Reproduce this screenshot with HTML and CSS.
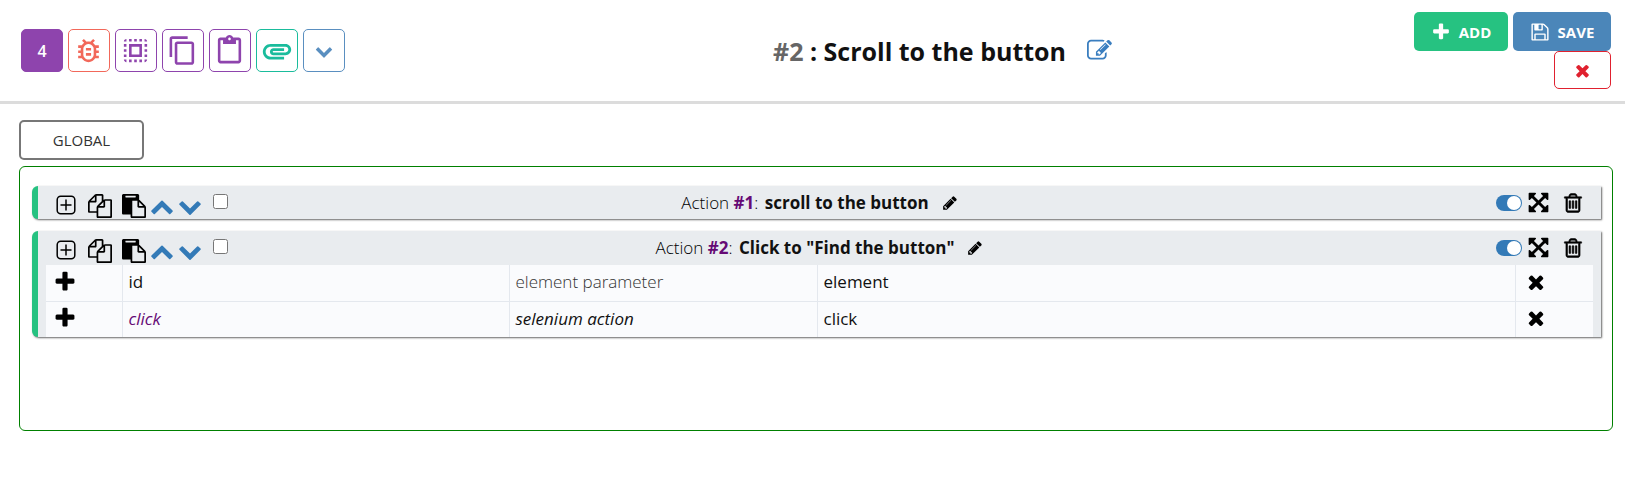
FILE: index.html
```html
<!DOCTYPE html>
<html lang="en">
<head>
<meta charset="utf-8">
<title>Scroll to the button</title>
<link rel="stylesheet" href="styles.css">
</head>
<body>
<svg class="defs" width="0" height="0" aria-hidden="true">
  <symbol id="fa-plus" viewBox="0 0 1792 1792"><path d="M1600 736v192q0 40-28 68t-68 28h-416v416q0 40-28 68t-68 28h-192q-40 0-68-28t-28-68v-416h-416q-40 0-68-28t-28-68v-192q0-40 28-68t68-28h416v-416q0-40 28-68t68-28h192q40 0 68 28t28 68v416h416q40 0 68 28t28 68z"/></symbol>
  <symbol id="fa-times" viewBox="0 0 1792 1792"><path d="M1490 1322q0 40-28 68l-136 136q-28 28-68 28t-68-28l-294-294-294 294q-28 28-68 28t-68-28l-136-136q-28-28-28-68t28-68l294-294-294-294q-28-28-28-68t28-68l136-136q28-28 68-28t68 28l294 294 294-294q28-28 68-28t68 28l136 136q28 28 28 68t-28 68l-294 294 294 294q28 28 28 68z"/></symbol>
  <symbol id="fa-down" viewBox="0 0 1792 1792"><path d="M1683 808l-742 741q-19 19-45 19t-45-19l-742-741q-19-19-19-45.5t19-45.5l166-165q19-19 45-19t45 19l531 531 531-531q19-19 45-19t45 19l166 165q19 19 19 45.5t-19 45.5z"/></symbol>
  <symbol id="fa-up" viewBox="0 0 1792 1792"><path d="M1683 1331l-166 165q-19 19-45 19t-45-19l-531-531-531 531q-19 19-45 19t-45-19l-166-165q-19-19-19-45.5t19-45.5l742-741q19-19 45-19t45 19l742 741q19 19 19 45.5t-19 45.5z"/></symbol>
  <symbol id="fa-pencil" viewBox="0 0 1792 1792"><path d="M491 1536l91-91-235-235-91 91v107h128v128h107zm523-928q0-22-22-22-10 0-17 7l-542 542q-7 7-7 17 0 22 22 22 10 0 17-7l542-542q7-7 7-17zm-54-192l416 416-832 832h-416v-416zm683 96q0 53-37 90l-166 166-416-416 166-165q36-38 90-38 53 0 91 38l235 234q37 39 37 91z"/></symbol>
  <symbol id="fa-trash" viewBox="0 0 1792 1792"><path d="M704 736v576q0 14-9 23t-23 9h-64q-14 0-23-9t-9-23v-576q0-14 9-23t23-9h64q14 0 23 9t9 23zm256 0v576q0 14-9 23t-23 9h-64q-14 0-23-9t-9-23v-576q0-14 9-23t23-9h64q14 0 23 9t9 23zm256 0v576q0 14-9 23t-23 9h-64q-14 0-23-9t-9-23v-576q0-14 9-23t23-9h64q14 0 23 9t9 23zm128 724v-948h-896v948q0 22 7 40.5t14.5 27 10.5 8.5h832q3 0 10.5-8.5t14.5-27 7-40.5zm-672-1076h448l-48-117q-7-9-17-11h-317q-10 2-17 11zm928 32v64q0 14-9 23t-23 9h-96v948q0 83-47 143.5t-113 60.5h-832q-66 0-113-58.5t-47-141.5v-952h-96q-14 0-23-9t-9-23v-64q0-14 9-23t23-9h309l70-167q15-37 54-63t79-26h320q40 0 79 26t54 63l70 167h309q14 0 23 9t9 23z"/></symbol>
  <symbol id="fa-expand" viewBox="0 0 1792 1792"><path d="M1411 541l-355 355 355 355 144-144q29-31 70-14 39 17 39 59v448q0 26-19 45t-45 19h-448q-42 0-59-40-17-39 14-69l144-144-355-355-355 355 144 144q31 30 14 69-17 40-59 40h-448q-26 0-45-19t-19-45v-448q0-42 40-59 39-17 69 14l144 144 355-355-355-355-144 144q-19 19-45 19-12 0-24-5-40-17-40-59v-448q0-26 19-45t45-19h448q42 0 59 40 17 39-14 69l-144 144 355 355 355-355-144-144q-31-30-14-69 17-40 59-40h448q26 0 45 19t19 45v448q0 42-39 59-13 5-25 5-26 0-45-19z"/></symbol>
  <symbol id="fa-edit" viewBox="0 0 1792 1792"><path d="M888 1184l116-116-152-152-116 116v56h96v96h56zm440-720q-16-16-33 1l-350 350q-17 17-1 33t33-1l350-350q17-17 1-33zm80 594v190q0 119-84.5 203.5t-203.5 84.5h-832q-119 0-203.5-84.5t-84.5-203.5v-832q0-119 84.5-203.5t203.5-84.5h832q63 0 117 25 15 7 18 23 3 17-9 29l-49 49q-14 14-32 8-23-6-45-6h-832q-66 0-113 47t-47 113v832q0 66 47 113t113 47h832q66 0 113-47t47-113v-126q0-13 9-22l64-64q15-15 35-7t20 29zm-96-738l288 288-672 672h-288v-288zm444 132l-92 92-288-288 92-92q28-28 68-28t68 28l152 152q28 28 28 68t-28 68z"/></symbol>
  <symbol id="fa-save" viewBox="0 0 1792 1792"><path d="M512 1536h768v-384h-768v384zm896 0h128v-896q0-14-10-38.5t-20-34.5l-281-281q-10-10-34-20t-39-10v416q0 40-28 68t-68 28h-576q-40 0-68-28t-28-68v-416h-128v1280h128v-416q0-40 28-68t68-28h832q40 0 68 28t28 68v416zm-384-928v-320q0-13-9.5-22.5t-22.5-9.5h-192q-13 0-22.5 9.5t-9.5 22.5v320q0 13 9.5 22.5t22.5 9.5h192q13 0 22.5-9.5t9.5-22.5zm640 32v928q0 40-28 68t-68 28h-1344q-40 0-68-28t-28-68v-1344q0-40 28-68t68-28h928q40 0 88 20t76 48l280 280q28 28 48 76t20 88z"/></symbol>
  <symbol id="fa-copy" viewBox="0 0 1792 1792"><path d="M1696 384q40 0 68 28t28 68v1216q0 40-28 68t-68 28h-960q-40 0-68-28t-28-68v-288h-544q-40 0-68-28t-28-68v-672q0-40 20-88t48-76l408-408q28-28 76-48t88-20h416q40 0 68 28t28 68v328q68-40 128-40h416zm-544 213l-299 299h299v-299zm-640-384l-299 299h299v-299zm196 647l316-316v-416h-384v416q0 40-28 68t-68 28h-416v640h512v-256q0-40 20-88t48-76zm956 804v-1152h-384v416q0 40-28 68t-68 28h-416v640h768z"/></symbol>
  <symbol id="fa-paste" viewBox="0 0 1792 1792"><path d="M768 1664h896v-640h-416q-40 0-68-28t-28-68v-416h-384v1152zm256-1440v-64q0-13-9.5-22.5t-22.5-9.5h-704q-13 0-22.5 9.5t-9.5 22.5v64q0 13 9.5 22.5t22.5 9.5h704q13 0 22.5-9.5t9.5-22.5zm256 672h299l-299-299v299zm512 128v672q0 40-28 68t-68 28h-960q-40 0-68-28t-28-68v-160h-544q-40 0-68-28t-28-68v-1344q0-40 28-68t68-28h1088q40 0 68 28t28 68v328q21 13 36 28l408 408q28 28 48 76t20 88z"/></symbol>
  <symbol id="plus-box" viewBox="0 0 20 20"><rect x="1.2" y="1.2" width="17.6" height="17.6" rx="3.5" fill="none" stroke="currentColor" stroke-width="1.5"/><path d="M10 4.5v11M4.5 10h11" fill="none" stroke="currentColor" stroke-width="1.5"/></symbol>
</svg>

<header class="topbar">
  <div class="tools">
    <span class="tool tool-count">4</span>
    <button class="tool tool-bug" type="button"><svg class="mi" viewBox="0 0 24 24"><path d="M20 8h-2.81c-.45-.78-1.07-1.45-1.82-1.96L17 4.41 15.59 3l-2.17 2.17c-.46-.11-.93-.17-1.42-.17s-.96.06-1.41.17L8.41 3 7 4.41l1.62 1.63c-.75.51-1.37 1.18-1.81 1.96H4v2h2.09c-.05.33-.09.66-.09 1v1H4v2h2v1c0 .34.04.67.09 1H4v2h2.81c1.04 1.79 2.97 3 5.19 3s4.15-1.21 5.19-3H20v-2h-2.09c.05-.33.09-.66.09-1v-1h2v-2h-2v-1c0-.34-.04-.67-.09-1H20V8zm-4 4v3c0 .22-.03.47-.07.7l-.1.65-.37.65c-.72 1.24-2.04 2-3.46 2s-2.74-.77-3.46-2l-.37-.64-.1-.65C8.03 15.48 8 15.23 8 15v-4c0-.23.03-.48.07-.7l.1-.65.37-.65c.3-.52.72-.97 1.21-1.31l.57-.39.74-.18c.31-.08.63-.12.94-.12.32 0 .63.04.95.12l.68.16.61.42c.5.34.91.78 1.21 1.31l.38.65.1.65c.04.22.07.47.07.69v1zm-6 2h4v2h-4zm0-4h4v2h-4z"/></svg></button>
    <button class="tool tool-purple" type="button"><svg class="mi" viewBox="0 0 24 24"><path d="M3 5h2V3c-1.1 0-2 .9-2 2zm0 8h2v-2H3v2zm4 8h2v-2H7v2zM3 9h2V7H3v2zm10-6h-2v2h2V3zm6 0v2h2c0-1.1-.9-2-2-2zM5 21v-2H3c0 1.1.9 2 2 2zm-2-4h2v-2H3v2zM9 3H7v2h2V3zm2 18h2v-2h-2v2zm8-8h2v-2h-2v2zm0 8c1.1 0 2-.9 2-2h-2v2zm0-12h2V7h-2v2zm0 8h2v-2h-2v2zm-4 4h2v-2h-2v2zm0-16h2V3h-2v2zM7 17h10V7H7v10zm2-8h6v6H9V9z"/></svg></button>
    <button class="tool tool-purple" type="button"><svg class="mi" viewBox="0 0 24 24"><path d="M16 1H4c-1.1 0-2 .9-2 2v14h2V3h12V1zm3 4H8c-1.1 0-2 .9-2 2v14c0 1.1.9 2 2 2h11c1.1 0 2-.9 2-2V7c0-1.1-.9-2-2-2zm0 16H8V7h11v14z"/></svg></button>
    <button class="tool tool-purple" type="button"><svg class="mi" viewBox="0 0 24 24"><path d="M19 2h-4.18C14.4.84 13.3 0 12 0c-1.3 0-2.4.84-2.82 2H5c-1.1 0-2 .9-2 2v16c0 1.1.9 2 2 2h14c1.1 0 2-.9 2-2V4c0-1.1-.9-2-2-2zm-7 0c.55 0 1 .45 1 1s-.45 1-1 1-1-.45-1-1 .45-1 1-1zm7 18H5V4h2v3h10V4h2v16z"/></svg></button>
    <button class="tool tool-teal" type="button"><svg class="mi mi-lg" viewBox="0 0 24 24"><path d="M2 12.5C2 9.46 4.46 7 7.5 7H18c2.21 0 4 1.79 4 4s-1.79 4-4 4H9.5C8.12 15 7 13.88 7 12.5S8.12 10 9.5 10H17v2H9.41c-.55 0-.55 1 0 1H18c1.1 0 2-.9 2-2s-.9-2-2-2H7.5C5.57 9 4 10.57 4 12.5S5.57 16 7.5 16H17v2H7.5C4.46 18 2 15.54 2 12.5z"/></svg></button>
    <button class="tool tool-blue" type="button"><svg class="fa fa-chev"><use href="#fa-down"/></svg></button>
  </div>
  <div class="page-title">
    <h1><span class="num">#2</span> : Scroll to the button</h1>
    <svg class="fa title-edit"><use href="#fa-edit"/></svg>
  </div>
  <div class="actions">
    <div class="actions-row">
      <button class="btn btn-add" type="button"><svg class="fa"><use href="#fa-plus"/></svg>ADD</button>
      <button class="btn btn-save" type="button"><svg class="fa"><use href="#fa-save"/></svg>SAVE</button>
    </div>
    <button class="btn-close" type="button"><svg class="fa"><use href="#fa-times"/></svg></button>
  </div>
</header>

<main class="content">
  <button class="tab" type="button">GLOBAL</button>
  <section class="panel">
    <article class="action">
      <div class="bar">
        <div class="bar-left">
          <svg class="i-box"><use href="#plus-box"/></svg>
          <svg class="i-file i-copy"><use href="#fa-copy"/></svg>
          <svg class="i-file i-paste"><use href="#fa-paste"/></svg>
          <svg class="i-chev"><use href="#fa-up"/></svg>
          <svg class="i-chev"><use href="#fa-down"/></svg>
          <input class="check" type="checkbox" aria-label="select">
        </div>
        <div class="bar-title">Action <b class="hash">#1</b>: <b class="name">scroll to the button</b><svg class="i-pencil"><use href="#fa-pencil"/></svg></div>
        <div class="bar-right">
          <span class="toggle"></span>
          <svg class="i-expand"><use href="#fa-expand"/></svg>
          <svg class="i-trash"><use href="#fa-trash"/></svg>
        </div>
      </div>
    </article>
    <article class="action">
      <div class="bar">
        <div class="bar-left">
          <svg class="i-box"><use href="#plus-box"/></svg>
          <svg class="i-file i-copy"><use href="#fa-copy"/></svg>
          <svg class="i-file i-paste"><use href="#fa-paste"/></svg>
          <svg class="i-chev"><use href="#fa-up"/></svg>
          <svg class="i-chev"><use href="#fa-down"/></svg>
          <input class="check" type="checkbox" aria-label="select">
        </div>
        <div class="bar-title">Action <b class="hash">#2</b>: <b class="name">Click to "Find the button"</b><svg class="i-pencil"><use href="#fa-pencil"/></svg></div>
        <div class="bar-right">
          <span class="toggle"></span>
          <svg class="i-expand"><use href="#fa-expand"/></svg>
          <svg class="i-trash"><use href="#fa-trash"/></svg>
        </div>
      </div>
      <table class="steps">
        <tr>
          <td class="c-add"><svg class="i-plus"><use href="#fa-plus"/></svg></td>
          <td class="c-field">id</td>
          <td class="c-type light">element parameter</td>
          <td class="c-value">element</td>
          <td class="c-del"><svg class="i-x"><use href="#fa-times"/></svg></td>
        </tr>
        <tr>
          <td class="c-add"><svg class="i-plus"><use href="#fa-plus"/></svg></td>
          <td class="c-field link">click</td>
          <td class="c-type strong">selenium action</td>
          <td class="c-value">click</td>
          <td class="c-del"><svg class="i-x"><use href="#fa-times"/></svg></td>
        </tr>
      </table>
    </article>
  </section>
</main>
</body>
</html>
```
FILE: styles.css
```css
* { box-sizing: border-box; }
html, body { margin: 0; padding: 0; background: #fff; }
body { font-family: "Open Sans", "Noto Sans", sans-serif; color: #111; height: 481px; overflow: hidden; }
button { font-family: inherit; cursor: pointer; padding: 0; }
svg { display: block; fill: currentColor; }
.defs { position: absolute; }

.topbar { display: flex; height: 104px; border-bottom: 3px solid #dcdcdc; padding: 12px 14px 0 21px; }
.tools { display: flex; gap: 4.5px; padding-top: 17px; align-items: flex-start; }
.tool { display: flex; align-items: center; justify-content: center; width: 42.5px; height: 43px; background: #fff; border: 1px solid; border-radius: 5px; }
.tool-count { width: 42px; background: #8e44ad; border-color: #8e44ad; color: #fff; font-size: 16px; font-weight: 600; }
.tool-bug { color: #f2685a; border-color: #f2685a; }
.tool-purple { color: #8e44ad; border-color: #8e44ad; }
.tool-teal { color: #1abc9c; border-color: #1abc9c; }
.tool-blue { color: #5a8fc0; border-color: #5a8fc0; }
.mi { width: 31px; height: 31px; }
.mi-lg { width: 34px; height: 34px; }
.fa-chev { width: 18px; height: 18px; }

.page-title { flex: 1; display: flex; justify-content: center; align-items: center; gap: 21px; padding: 0 0 12px 126px; }
.page-title h1 { margin: 0; font-size: 25px; font-weight: 700; color: #111; white-space: nowrap; }
.num { color: #666; }
.title-edit { width: 25px; height: 25px; color: #3a7ebf; }

.actions { display: flex; flex-direction: column; align-items: flex-end; }
.actions-row { display: flex; gap: 5px; }
.btn { display: flex; align-items: center; justify-content: center; height: 39px; border: 0; border-radius: 5px; color: #fff; font-size: 15px; font-weight: 700; gap: 8px; }
.btn svg { width: 20px; height: 20px; }
.btn-add { width: 94px; background: #26c281; }
.btn-save { width: 98px; background: #4b86b9; }
.btn-close { display: flex; align-items: center; justify-content: center; width: 57px; height: 38px; background: #fff; border: 1px solid #e0212f; border-radius: 5px; color: #e0212f; }
.btn-close svg { width: 19px; height: 19px; }

.content { padding: 16px 12px 0 19px; }
.tab { display: block; width: 125px; height: 40px; background: #fff; border: 2px solid #777; border-radius: 5px; color: #333; font-size: 15px; font-weight: 500; }
.panel { margin-top: 6px; height: 265px; border: 1px solid #008000; border-radius: 6px; padding: 19px 11px 0 12px; }
.action { background: #e9ecef; border-left: 6px solid #26c281; border-radius: 6px 0 0 6px; box-shadow: 1px 1px 2px rgba(0,0,0,.6); margin-bottom: 12px; }
.bar { display: grid; grid-template-columns: 1fr auto 1fr; align-items: center; height: 33px; }
.bar-left { display: flex; align-items: flex-start; padding: 8px 0 0 18px; height: 33px; }
.i-box { width: 20px; height: 20px; margin-top: 1px; color: #000; }
.i-file { width: 24px; height: 24px; color: #000; }
.i-copy { margin-left: 12px; }
.i-paste { margin-left: 10px; }
.i-chev { width: 24px; height: 24px; color: #337ab7; margin-left: 4px; }
.check { width: 15px; height: 15px; margin: 0 0 0 11px; }
.bar-title { display: flex; align-items: center; font-size: 17px; font-weight: 300; white-space: pre; color: #000; }
.hash { font-weight: 700; color: #660a75; }
.name { font-weight: 700; color: #111; margin-left: 2px; }
.i-pencil { width: 16px; height: 16px; margin-left: 13px; color: #000; }
.bar-right { display: flex; align-items: center; justify-content: flex-end; padding-right: 17px; }
.toggle { position: relative; width: 26px; height: 16px; background: #337ab7; border-radius: 8px; }
.toggle::after { content: ""; position: absolute; right: 1px; top: 1px; width: 14px; height: 14px; background: #fff; border-radius: 50%; }
.i-expand { width: 23px; height: 23px; color: #000; margin-left: 5px; }
.i-trash { width: 22px; height: 22px; color: #000; margin-left: 12px; stroke: currentColor; stroke-width: 45; }

.steps { width: calc(100% - 16px); margin: 1px 0 0 8px; border-collapse: collapse; table-layout: fixed; font-size: 17px; }
.steps td { height: 36px; padding: 0 6px 2px; border: 1px solid #e4e8ee; border-left: 0; border-top: 0; background: #fafbfd; }
.steps tr:last-child td { border-bottom: 0; }
.c-add { width: 76px; }
.c-field { width: 387px; }
.c-type { width: 308px; }
.c-value { width: 698px; }
.c-del { border-right: 0 !important; }
.i-plus { width: 24px; height: 24px; color: #000; margin-left: 1px; }
.i-x { width: 22px; height: 22px; color: #000; margin-left: 3px; }
.light { font-weight: 300; color: #333; }
.strong { font-style: italic; font-weight: 500; color: #111; }
.link { font-style: italic; font-weight: 400; color: #660a75; }
```
